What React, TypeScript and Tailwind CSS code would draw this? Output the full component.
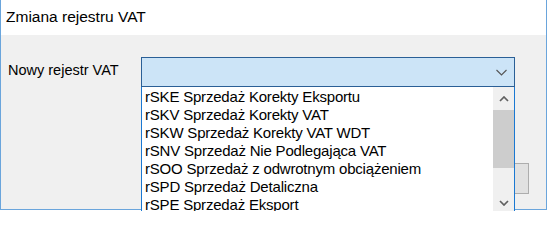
const registers = [
  "rSKE Sprzedaż Korekty Eksportu",
  "rSKV Sprzedaż Korekty VAT",
  "rSKW Sprzedaż Korekty VAT WDT",
  "rSNV Sprzedaż Nie Podlegająca VAT",
  "rSOO Sprzedaż z odwrotnym obciążeniem",
  "rSPD Sprzedaż Detaliczna",
  "rSPE Sprzedaż Eksport",
];

function Arrow({ up }: { up?: boolean }) {
  return (
    <svg width="10" height="6" viewBox="0 0 10 6" className={up ? "" : "rotate-180"}>
      <path d="M1 5 L5 1 L9 5" fill="none" stroke="#606060" strokeWidth="1.7" />
    </svg>
  );
}

export default function App() {
  return (
    <div
      className="relative w-[550px] h-[211px] overflow-hidden bg-white"
      style={{ fontFamily: '"Liberation Sans", Arial, sans-serif' }}
    >
      {/* Window */}
      <div className="w-[547px] h-[210px] flex flex-col border border-t-0 border-[#6aa5dc]">
        <div className="h-[35px] bg-white flex items-center pl-[5px] pb-[1px] text-[15.5px] text-black">
          Zmiana rejestru VAT
        </div>
        <div className="flex-1 bg-[#f0f0f0] pt-[22px]">
          <div className="flex items-center">
            <div className="w-[140px] pl-[7px] pb-[3px] text-[14.5px] text-black">Nowy rejestr VAT</div>
            <div className="w-[374px] h-[30px] bg-[#cce4f7] border border-[#2a5f96] flex items-center justify-end pr-[7px] pt-[1px]">
              <svg width="11" height="7" viewBox="0 0 11 7">
                <path d="M0.5 1 L5.5 6 L10.5 1" fill="none" stroke="#555555" strokeWidth="1.1" />
              </svg>
            </div>
          </div>
          <div className="flex justify-end pr-[17px] mt-[76px]">
            <div className="w-[88px] h-[31px] bg-[#e1e1e1] border border-[#adadad]" />
          </div>
        </div>
      </div>

      {/* Open dropdown list */}
      <div className="absolute left-[141px] top-[87px] w-[374px] h-[128px] bg-white border border-t-0 border-[#1a78d2] flex">
        <div className="flex-1 pt-[1px] pl-[3px] overflow-hidden">
          {registers.map((r) => (
            <div key={r} className="h-[18px] leading-[18px] text-[15px] tracking-[-0.2px] text-black whitespace-nowrap">
              {r}
            </div>
          ))}
        </div>
        <div className="w-[21px] bg-[#f0f0f0] flex flex-col">
          <div className="h-[23px] flex items-center justify-center">
            <Arrow up />
          </div>
          <div className="flex-1">
            <div className="h-[58px] bg-[#cdcdcd]" />
          </div>
          <div className="h-[22px] flex items-center justify-center">
            <Arrow />
          </div>
        </div>
      </div>
    </div>
  );
}
